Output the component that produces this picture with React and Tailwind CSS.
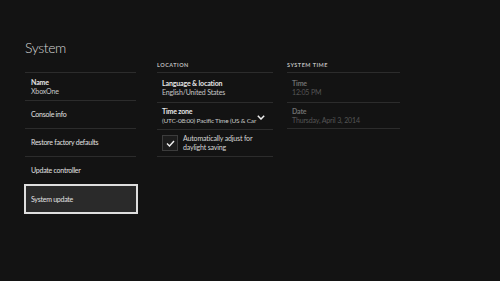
import React from 'react';

const font = { fontFamily: 'Lato, "Open Sans", sans-serif' };

const LeftRow = ({ children }) => (
  <div className="h-[28px] border-b border-[#2c2c2c] flex flex-col justify-center pl-[6px] text-[7px] tracking-[-0.25px] text-[#e2e2e2]">
    {children}
  </div>
);

const Field = ({ label, value, dim, className = '' }) => (
  <div className={`border-b border-[#2c2c2c] flex flex-col justify-center pl-[5px] tracking-[-0.15px] ${className}`}>
    <div className={`text-[7px] font-bold leading-[9px] ${dim ? 'text-[#6f6f6f]' : 'text-[#e6e6e6]'}`}>{label}</div>
    <div className={`text-[7px] leading-[9px] ${dim ? 'text-[#555]' : 'text-[#c8c8c8]'}`}>{value}</div>
  </div>
);

export default function App() {
  return (
    <div className="w-[500px] h-[281px] bg-[#131313] overflow-hidden pl-[25px] pt-[38px]" style={font}>
      <h1 className="text-[14px] font-light text-[#d6d6d6] leading-[20px] tracking-[-0.4px]">System</h1>
      <div className="flex">
        {/* left menu */}
        <div className="w-[111px]">
          <div className="h-[15px] border-b border-[#2c2c2c]" />
          <div className="h-[28px] border-b border-[#2c2c2c] flex flex-col justify-center pl-[6px] tracking-[-0.15px]">
            <div className="text-[7px] font-bold leading-[9px] text-[#e6e6e6]">Name</div>
            <div className="text-[7px] leading-[9px] text-[#c8c8c8]">XboxOne</div>
          </div>
          <LeftRow>Console info</LeftRow>
          <LeftRow>Restore factory defaults</LeftRow>
          <LeftRow>Update controller</LeftRow>
          <div className="-ml-[1px] -mt-[1px] w-[114px] h-[30px] border-2 border-[#dedede] bg-[#2a2a2a] flex items-center pl-[5px] text-[7px] tracking-[-0.25px] text-[#e2e2e2]">
            System update
          </div>
        </div>

        {/* location */}
        <div className="w-[116px] ml-[21px]">
          <div className="h-[15px] border-b border-[#2c2c2c] flex items-center text-[5.5px] font-bold tracking-[0.5px] text-[#bdbdbd]">
            LOCATION
          </div>
          <Field className="h-[30px]" label="Language & location" value="English/United States" />
          <div className="h-[27px] border-b border-[#2c2c2c] flex items-center pl-[5px] relative tracking-[-0.2px]">
            <div className="flex-1">
              <div className="text-[7px] font-bold leading-[9px] text-[#e6e6e6]">Time zone</div>
              <div className="text-[6.5px] leading-[9px] text-[#c8c8c8] whitespace-nowrap">(UTC-08:00) Pacific Time (US &amp; Car</div>
            </div>
            <svg width="8" height="5" viewBox="0 0 8 5" className="absolute right-[8px] top-[12px]">
              <path d="M0.8 0.8 L4 4 L7.2 0.8" stroke="#f0f0f0" strokeWidth="1.5" fill="none" />
            </svg>
          </div>
          <div className="h-[27px] border-b border-[#2c2c2c] flex items-center pl-[5px] gap-[5px]">
            <div className="w-[16px] h-[16px] border border-[#3c3c3c] bg-[#1c1c1c] flex items-center justify-center shrink-0">
              <svg width="9" height="7" viewBox="0 0 9 7">
                <path d="M1 3.5 L3.5 6 L8 1" stroke="#f2f2f2" strokeWidth="1.4" fill="none" />
              </svg>
            </div>
            <div className="text-[7px] leading-[9px] tracking-[-0.15px] text-[#d8d8d8]">
              Automatically adjust for<br />daylight saving
            </div>
          </div>
        </div>

        {/* system time */}
        <div className="w-[113px] ml-[14px]">
          <div className="h-[15px] border-b border-[#2c2c2c] flex items-center text-[5.5px] font-bold tracking-[0.5px] text-[#bdbdbd]">
            SYSTEM TIME
          </div>
          <Field dim className="h-[30px]" label="Time" value="12:05 PM" />
          <Field dim className="h-[26px]" label="Date" value="Thursday, April 3, 2014" />
        </div>
      </div>
    </div>
  );
}
